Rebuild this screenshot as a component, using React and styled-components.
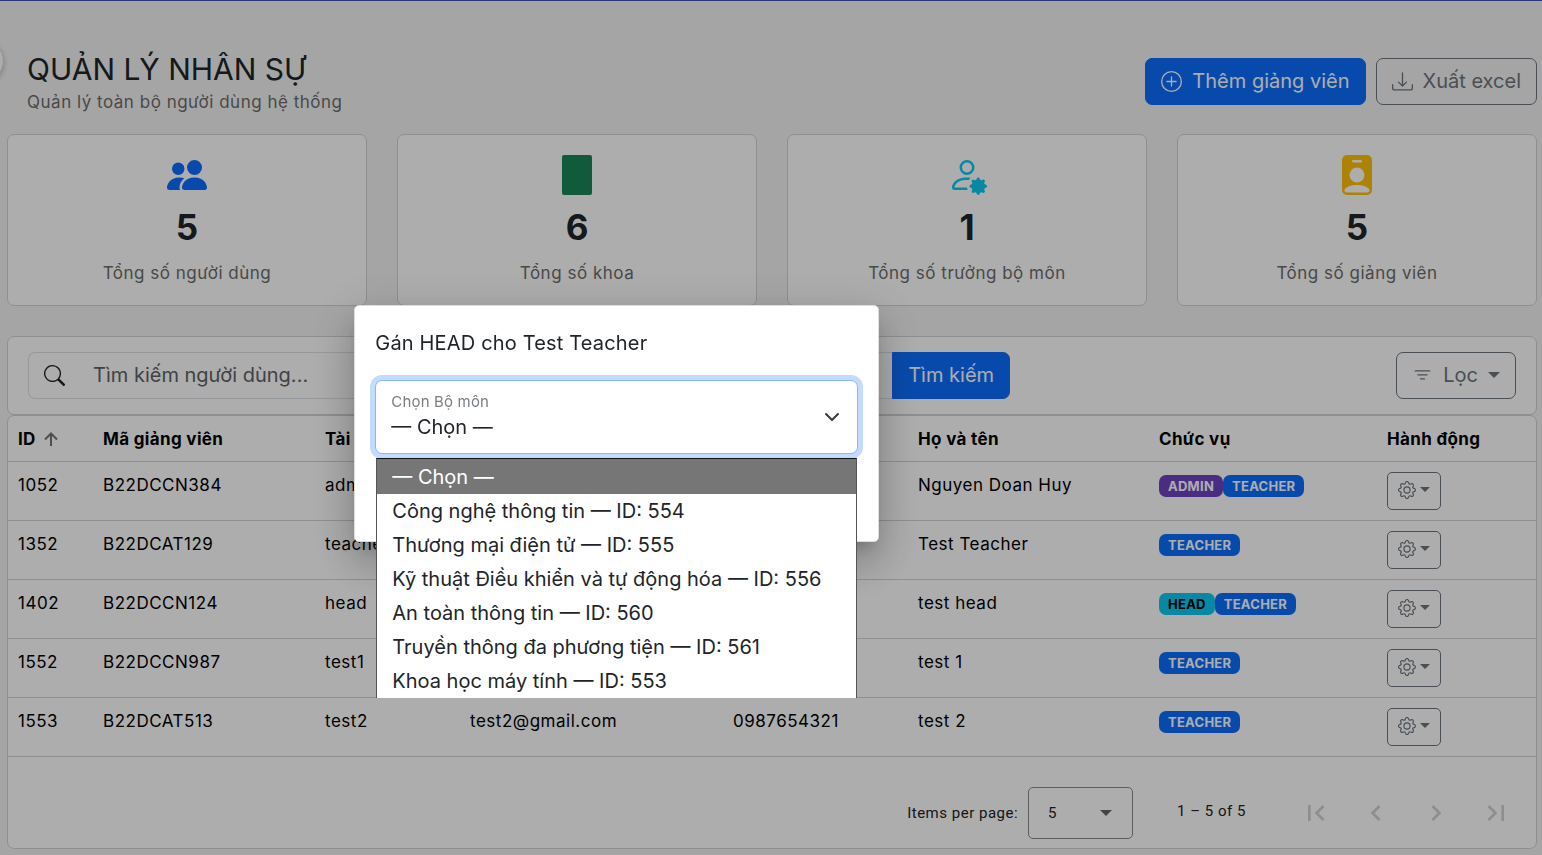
import React from "react";
import styled, { createGlobalStyle } from "styled-components";
import {
  BsPeopleFill,
  BsPersonBadgeFill,
  BsPlusCircle,
  BsDownload,
  BsSearch,
  BsFilter,
  BsGear,
} from "react-icons/bs";
import { MdFirstPage, MdChevronLeft, MdChevronRight, MdLastPage } from "react-icons/md";

const GlobalStyle = createGlobalStyle`
  *, *::before, *::after { box-sizing: border-box; }
  body {
    margin: 0;
    background: #f4f4f4;
    color: #212529;
    font: 400 17px/26px Inter, "Noto Sans", sans-serif;
    letter-spacing: 0.03em;
  }
  h1, h2, p, ul { margin: 0; padding: 0; font-weight: 400; }
  button, input, select { font-family: inherit; letter-spacing: normal; }
  svg { display: block; flex: none; }
`;

const Page = styled.main`
  position: relative;
  min-height: 100vh;
  padding: 0 5px 6px 7px;
  border-top: 1px solid #3f51b5;
  overflow: hidden;
`;

const SidebarToggle = styled.button`
  position: absolute;
  top: 40px;
  left: -37px;
  width: 40px;
  height: 40px;
  border: 0;
  border-radius: 50%;
  background: #fff;
  box-shadow: 0 2px 6px rgba(0, 0, 0, 0.3);
`;

const Header = styled.header`
  display: flex;
  justify-content: space-between;
  align-items: flex-start;
  padding: 48px 0 19px 20px;
`;

const Title = styled.h1`
  font-size: 30px;
  line-height: 40px;
  letter-spacing: normal;
`;

const Muted = styled.p`
  color: #6c6c6c;
`;

const Actions = styled.div`
  display: flex;
  gap: 10px;
  padding-top: 9px;
`;

const Button = styled.button`
  display: flex;
  align-items: center;
  gap: 10px;
  height: 47px;
  padding: 0 15px 1px;
  font-size: 20px;
  line-height: 30px;
  border-radius: 7px;
  border: 1px solid ${(p) => (p.$primary ? "#0d6efd" : "#6c757d")};
  background: ${(p) => (p.$primary ? "#0d6efd" : "transparent")};
  color: ${(p) => (p.$primary ? "#fff" : "#6c757d")};
`;

const Stats = styled.section`
  display: grid;
  grid-template-columns: repeat(4, 1fr);
  gap: 30px;
  margin-bottom: 30px;
`;

const StatCard = styled.article`
  display: flex;
  flex-direction: column;
  align-items: center;
  height: 172px;
  padding-top: 20px;
  background: #fff;
  border: 1px solid #d3d3d3;
  border-radius: 7px;
  color: ${(p) => p.$color};
`;

const StatValue = styled.strong`
  margin: 11px 0 12px;
  color: #212529;
  font-size: 35px;
  line-height: 42px;
  font-weight: 700;
  letter-spacing: normal;
`;

const Toolbar = styled.section`
  display: flex;
  justify-content: space-between;
  padding: 15px 20px;
  background: #fff;
  border: 1px solid #d3d3d3;
  border-radius: 7px;
`;

const SearchForm = styled.form`
  display: flex;
  width: 66%;
`;

const SearchBox = styled.label`
  display: flex;
  align-items: center;
  flex: 1;
  gap: 28px;
  padding: 0 0 1px 15px;
  border: 1px solid #dee2e6;
  border-right: 0;
  border-radius: 7px 0 0 7px;
`;

const SearchInput = styled.input`
  flex: 1;
  min-width: 0;
  padding: 0;
  border: 0;
  outline: 0;
  background: transparent;
  font-size: 20px;
  &::placeholder { color: #5f6266; opacity: 1; }
`;

const SearchButton = styled(Button)`
  border-radius: 0 7px 7px 0;
`;

const Caret = styled.span`
  border: solid transparent;
  border-width: ${(p) => (p.$small ? "5px 5px 0" : "6px 6px 0")};
  border-top-color: currentColor;
`;

const TableCard = styled.section`
  background: #fff;
  border: 1px solid #d3d3d3;
  border-radius: 7px;
`;

const Table = styled.table`
  width: 100%;
  table-layout: fixed;
  border-collapse: collapse;
  color: #000;
`;

const Col = styled.col`
  width: ${(p) => p.$width}px;
`;

const Th = styled.th`
  height: 45px;
  padding: 1px 10px 0;
  border-bottom: 1px solid #d3d3d3;
  text-align: left;
  font-weight: 700;
  letter-spacing: 0.02em;
`;

const SortLabel = styled.span`
  display: flex;
  align-items: center;
  gap: 8px;
`;

const Td = styled.td`
  height: 59px;
  padding: 10px;
  border-bottom: 1px solid #d3d3d3;
  vertical-align: top;
`;

const Badges = styled.div`
  display: flex;
  padding-top: 3px;
`;

const badgeColors = { ADMIN: "#6f42c1", TEACHER: "#0d6efd", HEAD: "#0dcaf0" };

const Badge = styled.span`
  padding: 0 9px;
  border-radius: 7px;
  background: ${(p) => badgeColors[p.$role]};
  color: ${(p) => (p.$role === "HEAD" ? "#000" : "#fff")};
  font-size: 13px;
  line-height: 22px;
  font-weight: 700;
  letter-spacing: 0.02em;
`;

const GearButton = styled.button`
  display: flex;
  align-items: center;
  justify-content: center;
  gap: 4px;
  width: 54px;
  height: 38px;
  padding: 0 0 2px;
  border: 1px solid #6c757d;
  border-radius: 5px;
  background: transparent;
  color: #6c757d;
`;

const Paginator = styled.footer`
  display: flex;
  align-items: center;
  justify-content: flex-end;
  height: 91px;
  padding: 21px 10px 0 0;
  font: 400 15px/20px Roboto, sans-serif;
  color: #222;
`;

const PageSize = styled.label`
  display: flex;
  align-items: center;
  gap: 10px;
`;

const PageSelectBox = styled.span`
  display: flex;
  align-items: center;
  width: 105px;
  height: 52px;
  padding-right: 20px;
  border: 1px solid #8a8a8a;
  border-radius: 5px;
  color: #666;
`;

const PageSelect = styled.select`
  flex: 1;
  appearance: none;
  height: 100%;
  padding: 0 0 0 19px;
  border: 0;
  background: transparent;
  font-size: 15px;
  color: #222;
`;

const Range = styled.span`
  margin: 0 40px 3px 44px;
`;

const PageButton = styled.button`
  display: grid;
  place-items: center;
  width: 60px;
  height: 60px;
  padding: 0;
  border: 0;
  background: transparent;
  color: #d2d2d2;
`;

const Backdrop = styled.div`
  position: fixed;
  inset: 0;
  display: flex;
  align-items: center;
  justify-content: center;
  padding: 0 20% 8px 0;
  background: rgba(0, 0, 0, 0.32);
`;

const Dialog = styled.section`
  width: 525px;
  height: 237px;
  padding: 22px 20px;
  background: #fff;
  border: 1px solid #ddd;
  border-radius: 5px;
  letter-spacing: 0.01em;
  box-shadow: 0 11px 15px -7px rgba(0, 0, 0, 0.2), 0 24px 38px 3px rgba(0, 0, 0, 0.14),
    0 9px 46px 8px rgba(0, 0, 0, 0.12);
`;

const DialogTitle = styled.h2`
  margin-bottom: 22px;
  font-size: 20px;
  line-height: 30px;
`;

const Field = styled.div`
  position: relative;
`;

const FieldLabel = styled.label`
  position: absolute;
  top: 11px;
  left: 16px;
  font-size: 15px;
  line-height: 22px;
  color: #7b7f83;
`;

const FieldSelect = styled.select`
  display: block;
  width: 100%;
  height: 74px;
  padding: 31px 15px 13px;
  appearance: none;
  border: 1px solid #86b7fe;
  border-radius: 7px;
  outline: 0;
  box-shadow: 0 0 0 5px #c2dbfe;
  background: #fff;
  color: #212529;
  font-size: 20px;
  line-height: 30px;
`;

const FieldChevron = styled.svg`
  position: absolute;
  top: 29px;
  right: 18px;
`;

const Options = styled.ul`
  position: absolute;
  top: calc(100% + 4px);
  left: 1px;
  right: 1px;
  border: solid #555;
  border-width: 1px 1px 0;
  border-top-color: #111;
  background: #fff;
  list-style: none;
  letter-spacing: normal;
`;

const Option = styled.li`
  padding: ${(p) => (p.$active ? "3px 15px 2px" : "2px 15px")};
  background: ${(p) => (p.$active ? "#767676" : "#fff")};
  color: ${(p) => (p.$active ? "#fff" : "#212529")};
  font-size: 20px;
  line-height: 30px;
`;

function PersonGearIcon() {
  return (
    <svg width="40" height="40" viewBox="0 0 16 16" fill="currentColor" aria-hidden="true">
      <path d="M11 5a3 3 0 1 1-6 0 3 3 0 0 1 6 0M8 7a2 2 0 1 0 0-4 2 2 0 0 0 0 4m.256 7a4.5 4.5 0 0 1-.229-1.004H3c.001-.246.154-.986.832-1.664C4.484 10.68 5.711 10 8 10q.39 0 .74.025c.226-.341.496-.65.804-.918Q8.844 9.002 8 9c-5 0-6 3-6 4s1 1 1 1zm3.63-4.54c.18-.613 1.048-.613 1.229 0l.043.148a.64.64 0 0 0 .921.382l.136-.074c.561-.306 1.175.308.87.869l-.075.136a.64.64 0 0 0 .382.92l.149.045c.612.18.612 1.048 0 1.229l-.15.043a.64.64 0 0 0-.38.921l.074.136c.305.561-.309 1.175-.87.87l-.136-.075a.64.64 0 0 0-.92.382l-.045.149c-.18.612-1.048.612-1.229 0l-.043-.15a.64.64 0 0 0-.921-.38l-.136.074c-.561.305-1.175-.309-.87-.87l.075-.136a.64.64 0 0 0-.382-.92l-.148-.045c-.613-.18-.613-1.048 0-1.229l.148-.043a.64.64 0 0 0 .382-.921l-.074-.136c-.306-.561.308-1.175.869-.87l.136.075a.64.64 0 0 0 .92-.382z" />
    </svg>
  );
}

const stats = [
  { value: 5, label: "Tổng số người dùng", color: "#0d6efd", icon: <BsPeopleFill size={40} /> },
  {
    value: 6,
    label: "Tổng số khoa",
    color: "#198754",
    icon: (
      <svg width="40" height="40" viewBox="0 0 40 40" aria-hidden="true">
        <rect x="5" width="30" height="40" rx="2" fill="currentColor" />
      </svg>
    ),
  },
  { value: 1, label: "Tổng số trưởng bộ môn", color: "#0dcaf0", icon: <PersonGearIcon /> },
  { value: 5, label: "Tổng số giảng viên", color: "#ffc107", icon: <BsPersonBadgeFill size={40} /> },
];

const widths = [85, 222, 145, 263, 185, 241, 228, 159];

const users = [
  { id: 1052, code: "B22DCCN384", account: "admin", name: "Nguyen Doan Huy", roles: ["ADMIN", "TEACHER"] },
  { id: 1352, code: "B22DCAT129", account: "teacher", name: "Test Teacher", roles: ["TEACHER"] },
  { id: 1402, code: "B22DCCN124", account: "head", name: "test head", roles: ["HEAD", "TEACHER"] },
  { id: 1552, code: "B22DCCN987", account: "test1", name: "test 1", roles: ["TEACHER"] },
  {
    id: 1553,
    code: "B22DCAT513",
    account: "test2",
    email: "test2@gmail.com",
    phone: "0987654321",
    name: "test 2",
    roles: ["TEACHER"],
  },
];

const departments = [
  "— Chọn —",
  "Công nghệ thông tin — ID: 554",
  "Thương mại điện tử — ID: 555",
  "Kỹ thuật Điều khiển và tự động hóa — ID: 556",
  "An toàn thông tin — ID: 560",
  "Truyền thông đa phương tiện — ID: 561",
  "Khoa học máy tính — ID: 553",
];

export default function App() {
  return (
    <>
      <GlobalStyle />
      <Page>
        <SidebarToggle aria-label="Menu" />
        <Header>
          <div>
            <Title>QUẢN LÝ NHÂN SỰ</Title>
            <Muted>Quản lý toàn bộ người dùng hệ thống</Muted>
          </div>
          <Actions>
            <Button $primary>
              <BsPlusCircle size={21} />
              Thêm giảng viên
            </Button>
            <Button>
              <BsDownload size={21} />
              Xuất excel
            </Button>
          </Actions>
        </Header>

        <Stats>
          {stats.map((s) => (
            <StatCard key={s.label} $color={s.color}>
              {s.icon}
              <StatValue>{s.value}</StatValue>
              <Muted>{s.label}</Muted>
            </StatCard>
          ))}
        </Stats>

        <Toolbar>
          <SearchForm>
            <SearchBox>
              <BsSearch size={21} />
              <SearchInput placeholder="Tìm kiếm người dùng..." aria-label="Tìm kiếm người dùng" />
            </SearchBox>
            <SearchButton $primary type="button">
              Tìm kiếm
            </SearchButton>
          </SearchForm>
          <Button>
            <BsFilter size={21} />
            Lọc
            <Caret />
          </Button>
        </Toolbar>

        <TableCard>
          <Table>
            <colgroup>
              {widths.map((w, i) => (
                <Col key={i} $width={w} />
              ))}
            </colgroup>
            <thead>
              <tr>
                <Th>
                  <SortLabel>
                    ID
                    <svg width="14" height="14" viewBox="0 0 14 14" fill="none" stroke="#757575" strokeWidth="2" aria-hidden="true">
                      <path d="M7 14V2M1 7.5L7 1.5l6 6" />
                    </svg>
                  </SortLabel>
                </Th>
                <Th>Mã giảng viên</Th>
                <Th>Tài khoản</Th>
                <Th aria-label="Email" />
                <Th aria-label="Số điện thoại" />
                <Th>Họ và tên</Th>
                <Th>Chức vụ</Th>
                <Th>Hành động</Th>
              </tr>
            </thead>
            <tbody>
              {users.map((u) => (
                <tr key={u.id}>
                  <Td>{u.id}</Td>
                  <Td>{u.code}</Td>
                  <Td>{u.account}</Td>
                  <Td>{u.email}</Td>
                  <Td>{u.phone}</Td>
                  <Td>{u.name}</Td>
                  <Td>
                    <Badges>
                      {u.roles.map((r) => (
                        <Badge key={r} $role={r}>
                          {r}
                        </Badge>
                      ))}
                    </Badges>
                  </Td>
                  <Td>
                    <GearButton aria-label="Hành động">
                      <BsGear size={18} />
                      <Caret $small />
                    </GearButton>
                  </Td>
                </tr>
              ))}
            </tbody>
          </Table>
          <Paginator>
            <PageSize>
              Items per page:
              <PageSelectBox>
                <PageSelect defaultValue="5">
                  <option>5</option>
                </PageSelect>
                <Caret />
              </PageSelectBox>
            </PageSize>
            <Range>1 – 5 of 5</Range>
            <PageButton disabled aria-label="First page"><MdFirstPage size={32} /></PageButton>
            <PageButton disabled aria-label="Previous page"><MdChevronLeft size={32} /></PageButton>
            <PageButton disabled aria-label="Next page"><MdChevronRight size={32} /></PageButton>
            <PageButton disabled aria-label="Last page"><MdLastPage size={32} /></PageButton>
          </Paginator>
        </TableCard>
      </Page>

      <Backdrop>
        <Dialog role="dialog" aria-labelledby="dialog-title">
          <DialogTitle id="dialog-title">Gán HEAD cho Test Teacher</DialogTitle>
          <Field>
            <FieldSelect id="department" defaultValue={departments[0]}>
              {departments.map((d) => (
                <option key={d}>{d}</option>
              ))}
            </FieldSelect>
            <FieldLabel htmlFor="department">Chọn Bộ môn</FieldLabel>
            <FieldChevron width="16" height="16" viewBox="0 0 16 16" fill="none" stroke="#343a40" strokeWidth="2" strokeLinecap="round" strokeLinejoin="round" aria-hidden="true">
              <path d="m2 5 6 6 6-6" />
            </FieldChevron>
            <Options role="listbox" aria-label="Chọn Bộ môn">
              {departments.map((d, i) => (
                <Option key={d} role="option" aria-selected={i === 0} $active={i === 0}>
                  {d}
                </Option>
              ))}
            </Options>
          </Field>
        </Dialog>
      </Backdrop>
    </>
  );
}
